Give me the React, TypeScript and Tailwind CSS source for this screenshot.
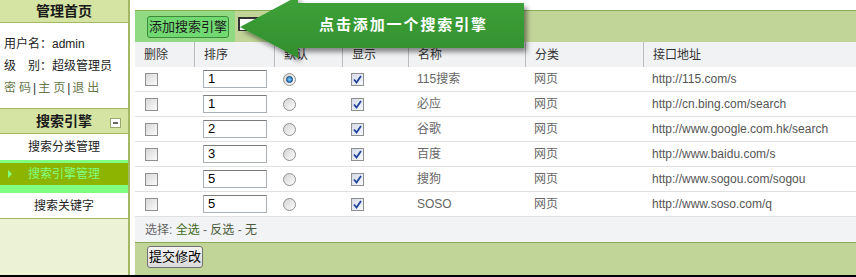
import React from "react";

const rows = [
  { order: "1", def: true, name: "115搜索", url: "http://115.com/s" },
  { order: "1", def: false, name: "必应", url: "http://cn.bing.com/search" },
  { order: "2", def: false, name: "谷歌", url: "http://www.google.com.hk/search" },
  { order: "3", def: false, name: "百度", url: "http://www.baidu.com/s" },
  { order: "5", def: false, name: "搜狗", url: "http://www.sogou.com/sogou" },
  { order: "5", def: false, name: "SOSO", url: "http://www.soso.com/q" },
];

const cols = "grid grid-cols-[59px_80px_68px_66px_117px_118px_1fr]";

function CheckBox({ checked }: { checked?: boolean }) {
  return (
    <span
      className={
        "inline-flex h-[13px] w-[13px] items-center justify-center border border-[#8e8f8f] bg-linear-to-br " +
        (checked ? "from-[#d6dbe8] to-[#f6f8fc]" : "from-[#d8d8d8] to-[#fbfbfb]")
      }
    >
      {checked && (
        <svg width="9" height="9" viewBox="0 0 9 9">
          <path d="M1 4.5 L3.5 7.5 L8 1" fill="none" stroke="#22429c" strokeWidth="1.8" />
        </svg>
      )}
    </span>
  );
}

function Radio({ checked }: { checked?: boolean }) {
  return (
    <span className="inline-flex h-[13px] w-[13px] items-center justify-center rounded-full border border-[#8e8f8f] bg-linear-to-br from-[#d4d4d4] to-[#fdfdfd]">
      {checked && (
        <span className="h-[7px] w-[7px] rounded-full border border-[#0c3f73] bg-radial from-[#7fd0ff] to-[#1467b5]" />
      )}
    </span>
  );
}

function Link2({ a, b }: { a: string; b: string }) {
  return (
    <span className="inline-flex gap-[3px] text-[#66774a]">
      <span>{a}</span>
      <span>{b}</span>
    </span>
  );
}

function Sidebar() {
  return (
    <div className="flex w-[130px] shrink-0 flex-col border-r-2 border-[#a3b862] text-[12px] text-[#222]">
      <div className="flex h-[23px] items-center justify-center border-b border-[#a3b862] bg-[#d5e4a2] text-[14px] font-bold text-[#1a1a1a]">
        管理首页
      </div>
      <div className="h-[86px] border-b border-[#a3b862] bg-white pl-[4px] pt-[10px] leading-[22px]">
        <div>用户名：admin</div>
        <div>级　别：超级管理员</div>
        <div className="flex items-center text-[#333]">
          <Link2 a="密" b="码" />
          <span className="mx-[2px]">|</span>
          <Link2 a="主" b="页" />
          <span className="mx-[2px]">|</span>
          <Link2 a="退" b="出" />
        </div>
      </div>
      <div className="relative flex h-[25px] items-center justify-center border-b border-[#a3b862] bg-[#d5e4a2] text-[14px] font-bold text-[#1a1a1a]">
        搜索引擎
        <span className="absolute right-[7px] top-[9px] flex h-[10px] w-[11px] items-center justify-center border border-[#98a870] bg-white">
          <span className="h-[2px] w-[5px] bg-[#666]" />
        </span>
      </div>
      <div className="flex h-[26px] items-center justify-center bg-white">搜索分类管理</div>
      <div className="relative flex h-[33px] items-center justify-center border-t-[3px] border-b-[8px] border-[#80ff80] bg-[#8cb400] text-[#80ff80]">
        <span className="absolute left-[8px] h-0 w-0 border-y-[4px] border-l-[4px] border-y-transparent border-l-[#80ff80]" />
        搜索引擎管理
      </div>
      <div className="flex h-[26px] items-center justify-center border-b border-[#a3b862] bg-white">搜索关键字</div>
      <div className="flex-1 bg-[#ebf2d6]" />
    </div>
  );
}

function Main() {
  return (
    <div className="ml-[5px] flex flex-1 flex-col text-[12px]">
      <div className="h-[10px] bg-white" />
      <div className="flex h-[32px] border-t border-[#8aab55] bg-[#c2d598]">
        <div className="flex w-[100px] items-center bg-[#90da84] pl-[12px]">
          <button className="h-[22px] rounded-[3px] border border-[#3a8a3a] bg-[#72d972] px-[1px] text-[13px] leading-[20px] text-[#1c1c1c]">
            添加搜索引擎
          </button>
        </div>
        <div className="ml-[3px] mt-[6px] h-[14px] w-[40px] border border-t-2 border-l-2 border-[#333] bg-white" />
      </div>
      <div className={cols + " h-[25px] items-center bg-[#f1f2f4] text-[#333]"}>
        {["删除", "排序", "默认", "显示", "名称", "分类", "接口地址"].map((h, i) => (
          <div key={h} className={"flex h-full items-center pl-[9px] " + (i > 0 ? "border-l border-[#b9bbbe] pl-[8px]" : "")}>
            {h}
          </div>
        ))}
      </div>
      {rows.map((r, i) => (
        <div key={i} className={cols + " h-[25px] items-center border-b border-[#e0e0e0] bg-white text-[#666]"}>
          <div className="flex pl-[10px]">
            <CheckBox />
          </div>
          <div className="pl-[9px]">
            <div className="h-[18px] w-[64px] border border-[#a9b0b8] border-t-[#7b7b7b] bg-white pl-[4px] text-[13px] leading-[16px] text-black">
              {r.order}
            </div>
          </div>
          <div className="flex pl-[9px]">
            <Radio checked={r.def} />
          </div>
          <div className="flex pl-[9px]">
            <CheckBox checked />
          </div>
          <div className="pl-[9px]">{r.name}</div>
          <div className="pl-[9px]">网页</div>
          <div className="pl-[9px] text-[#555]">{r.url}</div>
        </div>
      ))}
      <div className="flex h-[25px] items-center bg-[#f2f3f5] pl-[10px] text-[#666]">
        选择:&nbsp;<span className="text-[#3f6a22]">全选</span>&nbsp;-&nbsp;
        <span className="text-[#4a5a3a]">反选</span>&nbsp;-&nbsp;<span className="text-[#4a5a3a]">无</span>
      </div>
      <div className="flex-1 border-t border-[#8aab55] bg-[#c2d598] pl-[12px] pt-[3px]">
        <button className="h-[22px] rounded-[3px] border border-[#707070] bg-linear-to-b from-[#f4f4f4] to-[#dadada] px-[1px] text-[13px] leading-[20px] text-black">
          提交修改
        </button>
      </div>
    </div>
  );
}

function Arrow() {
  return (
    <>
      <svg className="pointer-events-none absolute left-0 top-0" width="856" height="70">
        <defs>
          <linearGradient id="ag" x1="0" y1="0" x2="0" y2="1">
            <stop offset="0" stopColor="#3ea239" />
            <stop offset="1" stopColor="#328f2d" />
          </linearGradient>
          <filter id="sh" x="-10%" y="-30%" width="120%" height="160%">
            <feDropShadow dx="3" dy="4" stdDeviation="2.5" floodColor="#000" floodOpacity="0.45" />
          </filter>
        </defs>
        <polygon
          points="240,27 298,-4 298,3 524,3 524,48 298,48 298,58"
          fill="url(#ag)"
          filter="url(#sh)"
        />
      </svg>
      <div className="pointer-events-none absolute left-[319px] top-[15px] text-[15px] font-bold leading-[20px] tracking-[1.9px] text-white">
        点击添加一个搜索引擎
      </div>
    </>
  );
}

export default function App() {
  return (
    <div className="relative flex h-[277px] w-[856px] flex-col overflow-hidden bg-white font-['Liberation_Sans','Noto_Sans_CJK_SC',sans-serif]">
      <div className="flex h-[275px]">
        <Sidebar />
        <Main />
      </div>
      <div className="h-[2px] bg-black" />
      <Arrow />
    </div>
  );
}
